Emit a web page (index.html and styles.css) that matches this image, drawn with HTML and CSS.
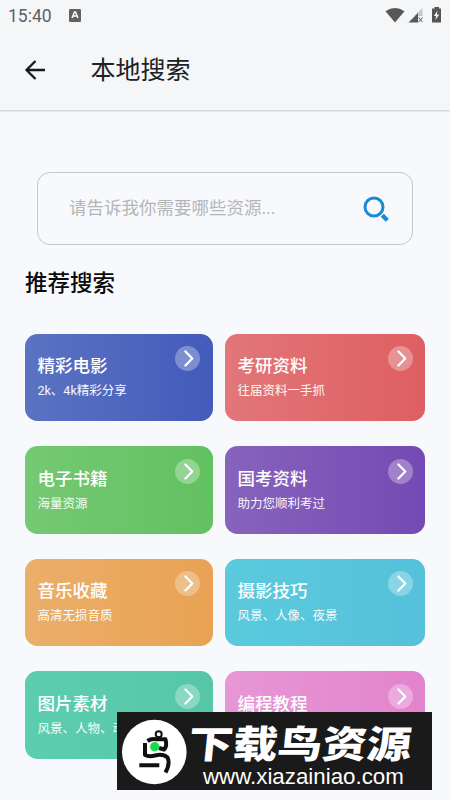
FILE: index.html
```html
<!DOCTYPE html>
<html lang="zh-CN">
<head>
<meta charset="utf-8">
<title>本地搜索</title>
<link rel="stylesheet" href="styles.css">
</head>
<body>
<svg class="defs" width="0" height="0"><symbol id="chev" viewBox="0 0 25 25"><circle cx="12.5" cy="12.5" r="12.5" fill="#fff" fill-opacity=".3"/><path d="M10.4 5.5L17.3 12.5L10.4 19.5" fill="none" stroke="#fff" stroke-width="2.3" stroke-linecap="round" stroke-linejoin="round"/></symbol></svg>
<header class="top">
  <div class="status">
    <span class="time">15:40</span>
    <svg class="input-icon" width="12" height="13" viewBox="0 0 12 13"><rect width="12" height="13" rx="1.3" fill="#616161"/><path d="M3 9L5.5 3H6.5L9 9M4 7H8" fill="none" stroke="#fff" stroke-width="1.4"/></svg>
    <svg class="signals" width="58" height="18" viewBox="0 0 58 18">
      <path d="M0.5 4.2Q10 -2.4 19.5 4.2L10 15.5Z" fill="#585858"/>
      <path d="M37.5 1V9H29Z" fill="#c6c7c9"/><path d="M23.5 15.5L33 6V15.5Z" fill="#585858"/><path d="M33.5 10.5L37.5 15M37.5 10.5L33.5 15" stroke="#707070" stroke-width="1.1"/>
      <path d="M49.5 0H54V1.5H56V15.5H47V1.5H49.5Z" fill="#555"/><path d="M52.5 3.5L49 9H51.2L50.4 13L54.2 7.5H51.8Z" fill="#fff"/>
    </svg>
  </div>
  <div class="bar">
    <svg width="22" height="20" viewBox="0 0 22 20"><path d="M11.5 1L2.5 10L11.5 19M3 10H21" fill="none" stroke="#17181a" stroke-width="2.3"/></svg>
    <h1>本地搜索</h1>
  </div>
</header>
<main>
  <div class="search">
    <span>请告诉我你需要哪些资源...</span>
    <svg width="26" height="26" viewBox="0 0 26 26"><circle cx="11" cy="11" r="9" fill="none" stroke="#1989d8" stroke-width="3"/><path d="M19.3 19.3L24.3 24.3" stroke="#1989d8" stroke-width="4.3"/></svg>
  </div>
  <h2>推荐搜索</h2>
  <section class="grid">
    <article class="card blue"><h3>精彩电影</h3><p>2k、4k精彩分享</p><svg><use href="#chev"/></svg></article>
    <article class="card red"><h3>考研资料</h3><p>往届资料一手抓</p><svg><use href="#chev"/></svg></article>
    <article class="card green"><h3>电子书籍</h3><p>海量资源</p><svg><use href="#chev"/></svg></article>
    <article class="card purple"><h3>国考资料</h3><p>助力您顺利考过</p><svg><use href="#chev"/></svg></article>
    <article class="card orange"><h3>音乐收藏</h3><p>高清无损音质</p><svg><use href="#chev"/></svg></article>
    <article class="card cyan"><h3>摄影技巧</h3><p>风景、人像、夜景</p><svg><use href="#chev"/></svg></article>
    <article class="card teal"><h3>图片素材</h3><p>风景、人物、动</p><svg><use href="#chev"/></svg></article>
    <article class="card pink"><h3>编程教程</h3><svg><use href="#chev"/></svg></article>
  </section>
</main>
<aside class="mark">
  <svg width="66" height="66" viewBox="0 0 66 66"><circle cx="33.3" cy="33" r="32.3" fill="#fff"/>
    <g fill="none" stroke="#101010" stroke-width="4" stroke-linejoin="round"><circle cx="37.7" cy="15.3" r="3" stroke-width="2"/><path d="M26.5 22Q30 19.5 35 20.3H44.5Q46.5 27 43 30.5L38 29"/><path d="M24 24V36Q28 38 34 36.5Q42 34.5 46.5 38.5Q49.5 44 44.5 53.5M18.3 46.2H38.3"/></g>
    <circle cx="33.7" cy="27.7" r="4.7" fill="#20d653"/></svg>
  <div class="mark-text"><strong>下载鸟资源</strong><span>www.xiazainiao.com</span></div>
</aside>
</body>
</html>
```
FILE: styles.css
```css
* { box-sizing: border-box; margin: 0; }
body {
  width: 450px;
  height: 800px;
  overflow: hidden;
  position: relative;
  background: #f8f9fc;
  font-family: Roboto, "Noto Sans CJK SC", sans-serif;
}
.defs { position: absolute; }
.top {
  height: 110px;
  background: #f5f6f8;
  box-shadow: 0 1px 2px rgba(0, 0, 0, .2);
}
.status {
  height: 31px;
  padding: 0 8px;
  display: flex;
  align-items: center;
}
.time { font-size: 17.5px; color: #606060; width: 60px; line-height: 32px; }
.input-icon { margin-left: 1px; }
.signals { margin-left: auto; margin-right: -1px; }
.bar {
  height: 78px;
  padding-left: 24px;
  display: flex;
  align-items: center;
}
.bar h1 {
  margin-left: 44.5px;
  margin-top: 2px;
  font-size: 25px;
  font-weight: 400;
  line-height: 36px;
  color: #202124;
}
main { padding: 62px 25px 0; }
.search {
  height: 73px;
  margin: 0 12.5px 0 12px;
  padding: 0 23px 0 31px;
  display: flex;
  align-items: center;
  justify-content: space-between;
  border: 1px solid #c5c6ca;
  border-radius: 13px;
  font-size: 17.5px;
  color: #b4b5b8;
}
.search span { line-height: 26px; margin-top: -1px; }
h2 {
  margin: 21px 0 32.6px;
  height: 35px;
  line-height: 35px;
  font-size: 22.5px;
  font-weight: 500;
  color: #0a0a0a;
}
.grid {
  display: grid;
  grid-template-columns: 187.5px 200px;
  grid-auto-rows: 87.5px;
  gap: 25px 12.5px;
}
.card {
  position: relative;
  padding: 19.5px 12.5px 0;
  border-radius: 12.5px;
  color: #fff;
}
.card h3 { font-size: 17.5px; line-height: 26px; font-weight: 500; }
.card p { margin-top: 2px; font-size: 12.5px; line-height: 20px; opacity: .95; }
.card svg { position: absolute; top: 12.5px; right: 12.5px; width: 25px; height: 25px; }
.blue { background: linear-gradient(90deg, #5b73c2, #435bba); }
.red { background: linear-gradient(90deg, #e27678, #de5f61); }
.green { background: linear-gradient(90deg, #75c973, #62c160); }
.purple { background: linear-gradient(90deg, #8763bd, #754ab3); }
.orange { background: linear-gradient(90deg, #ebaf6a, #e9a253); }
.cyan { background: linear-gradient(90deg, #5bcadd, #55c1da); }
.teal { background: linear-gradient(90deg, #5dcdb0, #56c7a6); }
.pink { background: linear-gradient(90deg, #e797d5, #e283cd); }
.mark {
  position: absolute;
  left: 117px;
  top: 712px;
  width: 315px;
  height: 78px;
  padding-left: 4px;
  display: flex;
  align-items: center;
  background: #1a1a1a;
  color: #fff;
}
.mark > svg { margin-top: 2px; }
.mark-text { margin-left: 2px; width: 224px; height: 78px; }
.mark-text strong {
  display: block;
  width: 190px;
  height: 53px;
  line-height: 66px;
  font-size: 38px;
  font-weight: 900;
  transform: scaleX(1.175) skewX(-5deg);
  transform-origin: 0 50%;
  white-space: nowrap;
}
.mark-text span {
  display: block;
  margin-left: 14px;
  font: 22.3px/24px "Liberation Sans", sans-serif;
}
```
